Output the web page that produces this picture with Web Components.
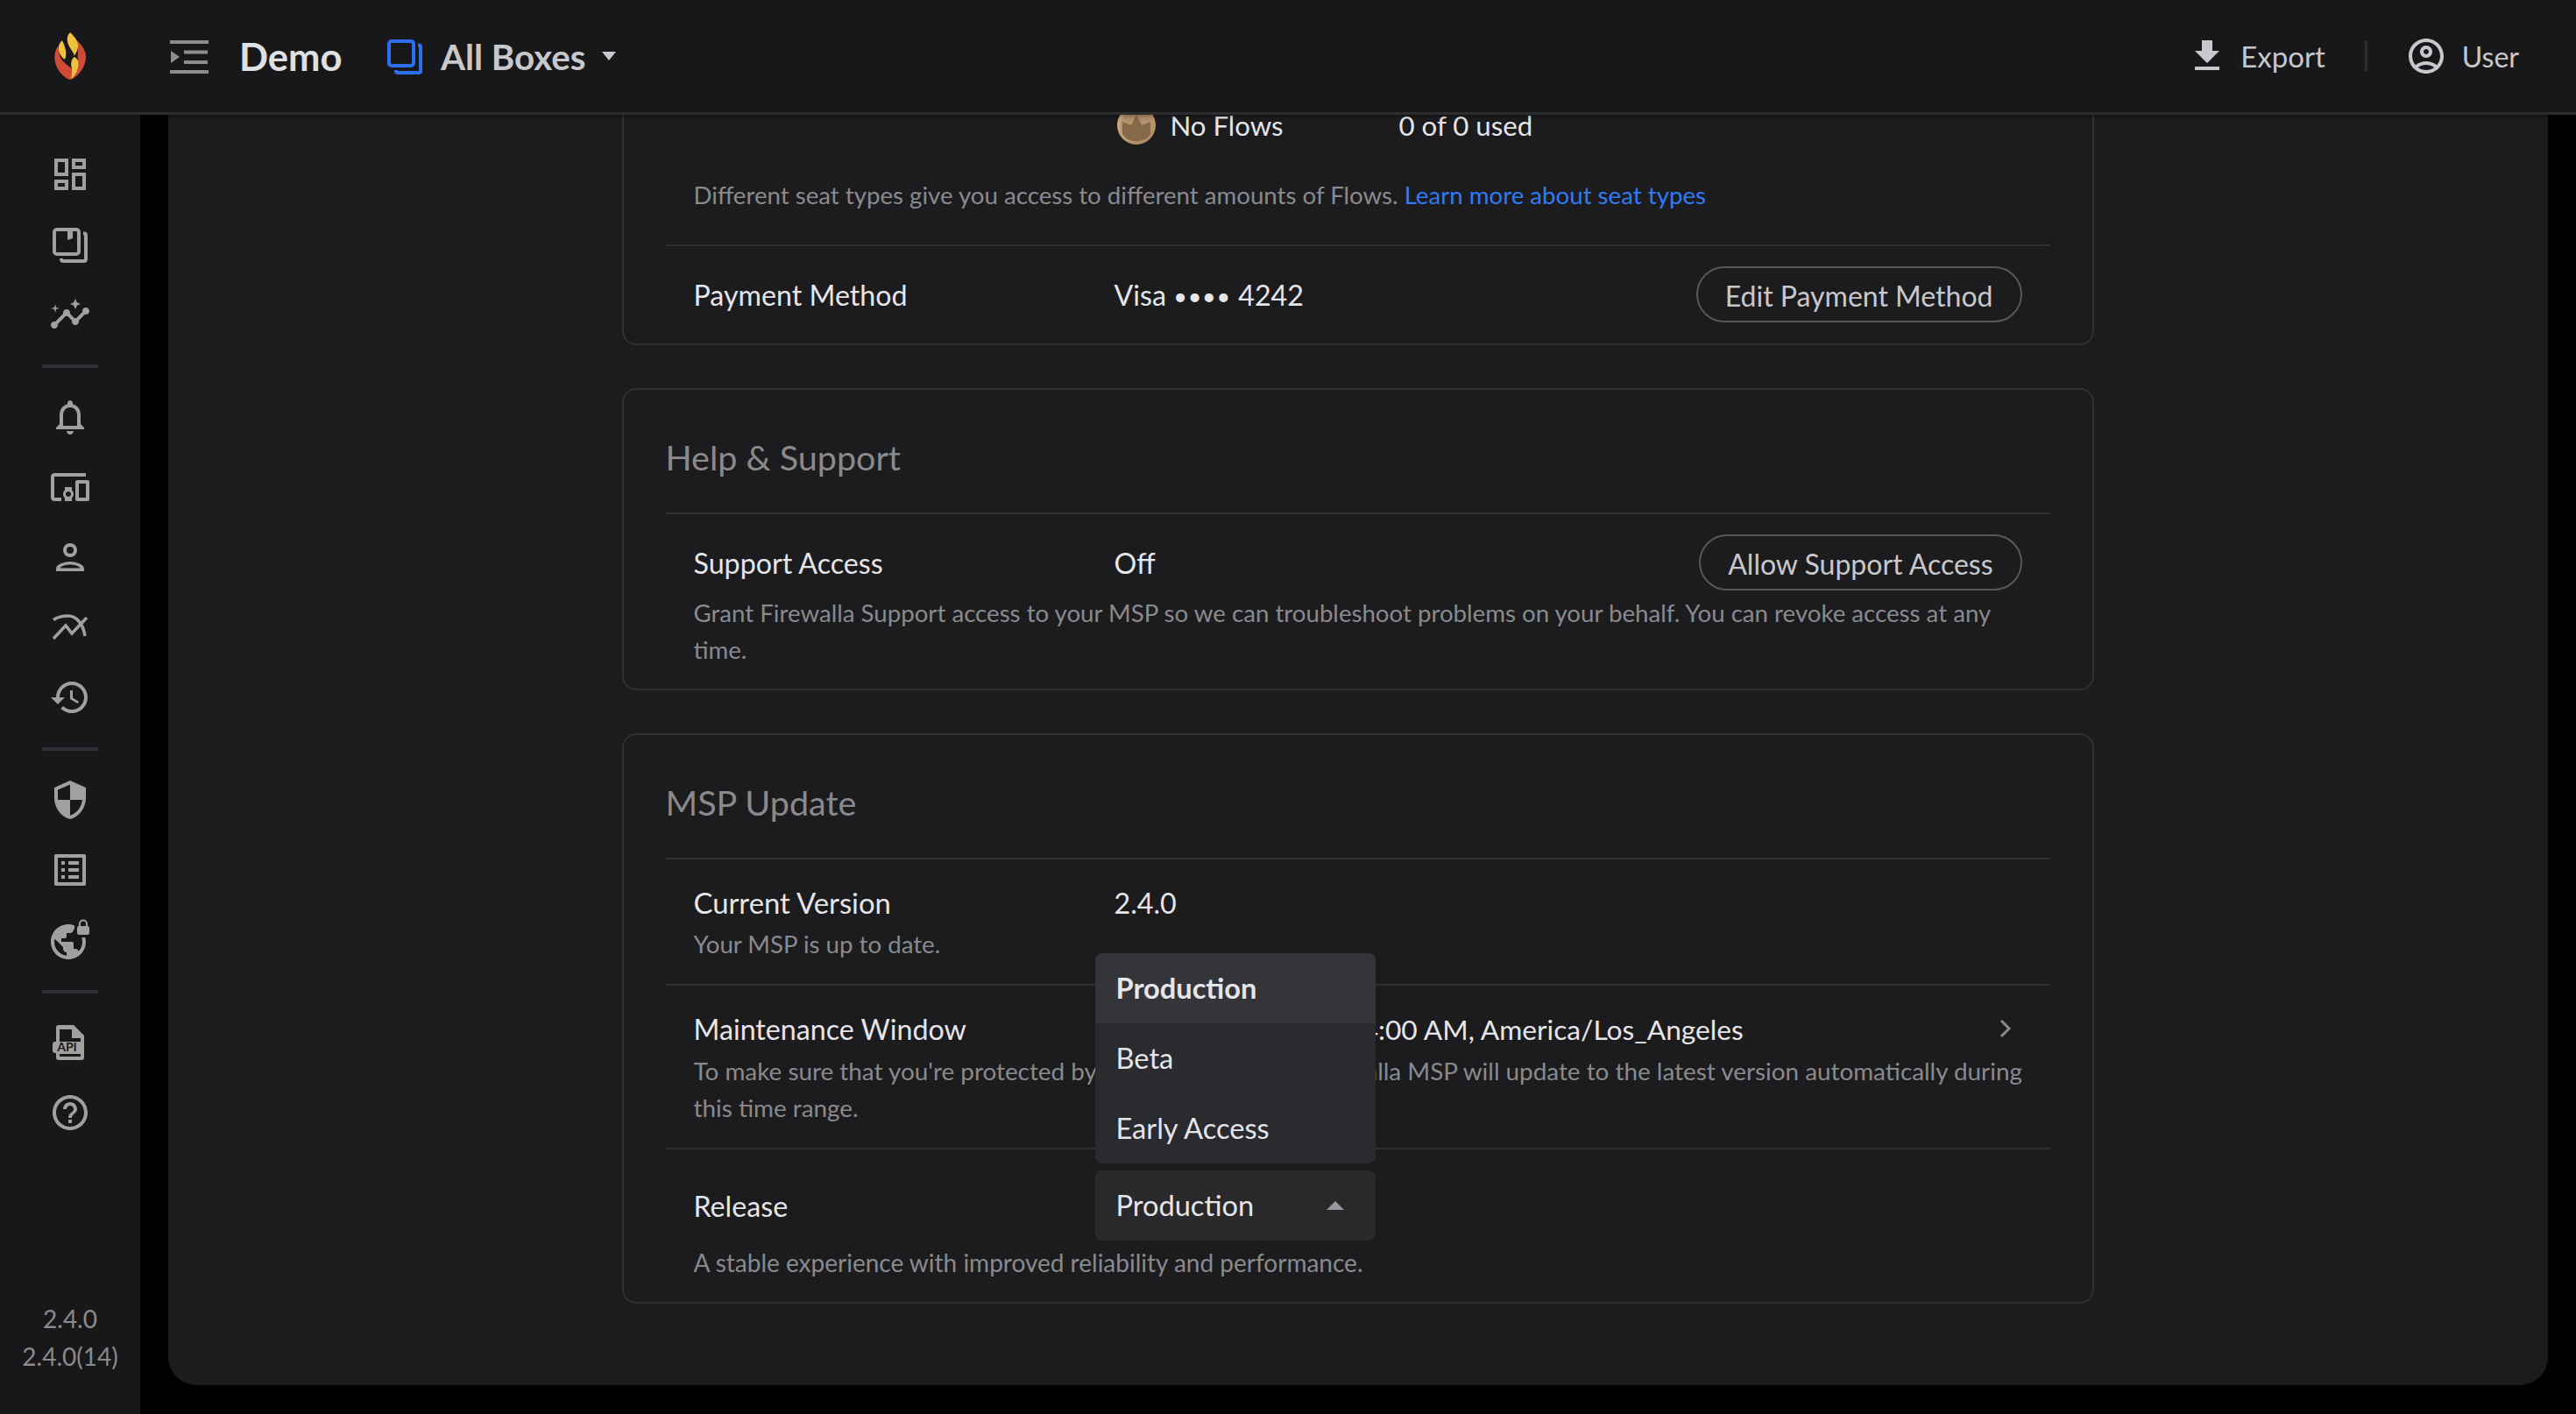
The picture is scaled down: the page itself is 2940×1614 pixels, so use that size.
<!DOCTYPE html>
<html lang="en">
<head>
<meta charset="utf-8">
<title>MSP Settings</title>
<style>
  html, body { margin: 0; height: 100%; background: #000; overflow: hidden; }
  body { font-family: "Lato", "Liberation Sans", sans-serif; color: #e5e5ea; }
</style>
</head>
<body>
<fw-app>
  <fw-topbar slot="top"></fw-topbar>
  <fw-sidebar slot="side"></fw-sidebar>

  <fw-card style="margin-top:-60px" bare>
    <fw-row style="--top:50px;--head:46px;--gap:36px;--bottom:35px" borderless>
      <seat-usage slot="value"></seat-usage>
      Different seat types give you access to different amounts of Flows. <a-link>Learn more about seat types</a-link>
    </fw-row>
    <fw-row label="Payment Method" style="--top:23px;--head:64px;--bottom:24px">
      <span slot="value">Visa <small style="font-size:27px;vertical-align:1px;letter-spacing:.8px">••••</small> 4242</span>
      <pill-button slot="action">Edit Payment Method</pill-button>
    </fw-row>
  </fw-card>

  <fw-card title="Help &amp; Support">
    <fw-row label="Support Access" style="--top:23px;--head:64px;--gap:5px;--bottom:23px">
      <span slot="value">Off</span>
      <pill-button slot="action">Allow Support Access</pill-button>
      Grant Firewalla Support access to your MSP so we can troubleshoot problems on your behalf. You can revoke access at any time.
    </fw-row>
  </fw-card>

  <fw-card title="MSP Update">
    <fw-row label="Current Version" style="--top:25px;--head:46px;--gap:5px;--bottom:24px;--label:32.800px">
      <span slot="value">2.4.0</span>
      Your MSP is up to date.
    </fw-row>
    <fw-row label="Maintenance Window" style="--top:25px;--head:46px;--gap:6px;--bottom:24px;--desc:27.850px;--over:-14px">
      <span slot="value" style="font-size:31.700px">Sunday, 12:00 AM - 4:00 AM, America/Los_Angeles</span>
      <svg slot="action" width="24" height="24" viewBox="0 0 24 24" style="display:block;margin-right:7px"><path d="M7 3l9 9-9 9" fill="none" stroke="#8a8a8e" stroke-width="3"/></svg>
      To make sure that you're protected by the latest updates, Firewalla MSP will update to the latest version automatically during this time range.
    </fw-row>
    <fw-row label="Release" style="--top:24px;--head:80px;--gap:4px;--bottom:24px;--desc:28px">
      <release-select slot="value" value="Production" options="Production,Beta,Early Access"></release-select>
      A stable experience with improved reliability and performance.
    </fw-row>
  </fw-card>
</fw-app>

<script>
const ICONS = {
  dashboard: '<path d="M19 5v2h-4V5h4M9 5v6H5V5h4m10 8v6h-4v-6h4M9 17v2H5v-2h4M21 3h-8v6h8V3zM11 3H3v10h8V3zm10 8h-8v10h8V11zm-10 4H3v6h8v-6z"/>',
  insights: '<path d="M21 8c-1.45 0-2.26 1.44-1.93 2.51l-3.55 3.56c-.3-.09-.74-.09-1.04 0l-2.55-2.55C12.27 10.45 11.46 9 10 9c-1.45 0-2.27 1.44-1.93 2.52l-4.56 4.55C2.44 15.74 1 16.55 1 18c0 1.1.9 2 2 2 1.45 0 2.26-1.44 1.93-2.51l4.55-4.56c.3.09.74.09 1.04 0l2.55 2.55C12.73 16.55 13.54 18 15 18c1.45 0 2.27-1.44 1.93-2.52l3.56-3.55c1.07.33 2.51-.48 2.51-1.93 0-1.1-.9-2-2-2z"/><path d="M15 9l.94-2.07L18 6l-2.06-.93L15 3l-.92 2.07L12 6l2.08.93zM3.5 11L4 9l2-.5L4 8l-.5-2L3 8l-2 .5L3 9z"/>',
  bell: '<path d="M12 22c1.1 0 2-.9 2-2h-4c0 1.1.9 2 2 2zm6-6v-5c0-3.07-1.63-5.64-4.5-6.32V4c0-.83-.67-1.5-1.5-1.5s-1.5.67-1.5 1.5v.68C7.64 5.36 6 7.92 6 11v5l-2 2v1h16v-1l-2-2zm-2 1H8v-6c0-2.48 1.51-4.5 4-4.5s4 2.02 4 4.5v6z"/>',
  devices: '<path d="M3 6h18V4H3c-1.1 0-2 .9-2 2v12c0 1.1.9 2 2 2h4v-2H3V6zm10 6H9v1.78c-.61.55-1 1.33-1 2.22s.39 1.67 1 2.22V20h4v-1.78c.61-.55 1-1.34 1-2.22s-.39-1.67-1-2.22V12zm-2 5.5c-.83 0-1.5-.67-1.5-1.5s.67-1.5 1.5-1.5 1.5.67 1.5 1.5-.67 1.5-1.5 1.5zM22 8h-6c-.5 0-1 .5-1 1v10c0 .5.5 1 1 1h6c.5 0 1-.5 1-1V9c0-.5-.5-1-1-1zm-1 10h-4v-8h4v8z"/>',
  history: '<path d="M13 3c-4.97 0-9 4.03-9 9H1l3.89 3.89.07.14L9 12H6c0-3.87 3.13-7 7-7s7 3.13 7 7-3.13 7-7 7c-1.93 0-3.68-.79-4.94-2.06l-1.42 1.42C8.27 19.99 10.51 21 13 21c4.97 0 9-4.03 9-9s-4.03-9-9-9zm-1 5v5l4.28 2.54.72-1.21-3.5-2.08V8H12z"/>',
  shield: '<path d="M12 1L3 5v6c0 5.55 3.84 10.74 9 12 5.16-1.26 9-6.45 9-12V5l-9-4zm0 10.99h7c-.53 4.12-3.28 7.79-7 8.94V12H5V6.3l7-3.11v8.8z"/>',
  list: '<path d="M19 5v14H5V5h14m1.1-2H3.9c-.5 0-.9.4-.9.9v16.2c0 .4.4.9.9.9h16.2c.4 0 .9-.5.9-.9V3.9c0-.5-.5-.9-.9-.9zM11 7h6v2h-6V7zm0 4h6v2h-6v-2zm0 4h6v2h-6zM7 7h2v2H7zm0 4h2v2H7zm0 4h2v2H7z"/>',
  help: '<path d="M11 18h2v-2h-2v2zm1-16C6.48 2 2 6.48 2 12s4.48 10 10 10 10-4.48 10-10S17.52 2 12 2zm0 18c-4.41 0-8-3.59-8-8s3.59-8 8-8 8 3.59 8 8-3.59 8-8 8zm0-14c-2.21 0-4 1.79-4 4h2c0-1.1.9-2 2-2s2 .9 2 2c0 2-3 1.75-3 5h2c0-2.25 3-2.5 3-5 0-2.21-1.79-4-4-4z"/>',
  download: '<path d="M19 9h-4V3H9v6H5l7 7 7-7zM5 18v2h14v-2H5z"/>',
  account: '<path d="M12 2C6.48 2 2 6.48 2 12s4.48 10 10 10 10-4.48 10-10S17.52 2 12 2zM7.35 18.5C8.66 17.56 10.26 17 12 17s3.34.56 4.65 1.5c-1.31.94-2.91 1.5-4.65 1.5s-3.34-.56-4.65-1.5zm10.79-1.38C16.45 15.8 14.32 15 12 15s-4.45.8-6.14 2.12C4.7 15.73 4 13.95 4 12c0-4.42 3.58-8 8-8s8 3.58 8 8c0 1.95-.7 3.73-1.86 5.12z"/><path d="M12 6c-1.93 0-3.5 1.57-3.5 3.5S10.07 13 12 13s3.5-1.57 3.5-3.5S13.93 6 12 6zm0 5c-.83 0-1.5-.67-1.5-1.5S11.17 8 12 8s1.5.67 1.5 1.5S12.83 11 12 11z"/>'
};

// these are drawn on the 48 grid, not the 24 one
const ICONS48 = {
  boxes: '<rect x="6" y="7" width="28" height="28" rx="3" fill="none" stroke="currentColor" stroke-width="4"/><path d="M39 11.5h1a2 2 0 0 1 2 2V41a2 2 0 0 1-2 2H16a2 2 0 0 1-2-2v-1" fill="none" stroke="currentColor" stroke-width="4"/>',
  pages: '<rect x="6" y="7" width="28" height="28" rx="3" fill="none" stroke="currentColor" stroke-width="4"/><path d="M21 8h6v9l-6 2z"/><path d="M39 11.5h1a2 2 0 0 1 2 2V41a2 2 0 0 1-2 2H16a2 2 0 0 1-2-2v-1" fill="none" stroke="currentColor" stroke-width="4"/>',
  person: '<circle cx="24" cy="16" r="6" fill="none" stroke="currentColor" stroke-width="4"/><path fill-rule="evenodd" d="M8 40v-3c0-5.300 10.700-8 16-8s16 2.700 16 8v3zM12.500 36.500h23c-1-2.500-7-4-11.500-4s-10.500 1.500-11.500 4z"/>',
  flows: '<path d="M5 15.500C10 12 16 11 22 11c9 0 17 9 19 23" fill="none" stroke="currentColor" stroke-width="3.500"/><path d="M5 37l14-15 7 9 17-18" fill="none" stroke="currentColor" stroke-width="3.500"/>',
  globelock: '<g transform="translate(-2 2) scale(2)"><path d="M12 2C6.480 2 2 6.480 2 12s4.480 10 10 10 10-4.480 10-10S17.520 2 12 2zm-1 17.930c-3.950-.490-7-3.850-7-7.930 0-.620.080-1.210.210-1.790L9 15v1c0 1.100.900 2 2 2v1.930zm6.900-2.540c-.260-.810-1-1.390-1.900-1.390h-1v-3c0-.550-.450-1-1-1H8v-2h2c.550 0 1-.450 1-1V7h2c1.100 0 2-.900 2-2v-.410c2.930 1.190 5 4.060 5 7.410 0 2.080-.800 3.970-2.100 5.390z"/></g><rect x="29" y="4" width="20" height="17" rx="4" fill="#18181a"/><rect x="32" y="8" width="14" height="10" rx="2"/><path d="M35 9V5.500a4 4 0 0 1 8 0V9" fill="none" stroke="currentColor" stroke-width="2"/>',
  api: '<path d="M11 4h17l12 12v25a3 3 0 0 1-3 3H11a3 3 0 0 1-3-3V7a3 3 0 0 1 3-3z"/><path d="M12 9h14v10h10v4H12z" fill="#18181a"/><rect x="4" y="23" width="10" height="13" rx="3"/><rect x="12" y="37" width="24" height="3" fill="#18181a"/><text x="20.500" y="34" text-anchor="middle" font-family="Lato, sans-serif" font-size="14" font-weight="700" fill="#18181a">API</text>'
};

function svgIcon(name, size) {
  size = size || 48;
  if (ICONS48[name]) return `<svg width="${size}" height="${size}" viewBox="0 0 48 48" fill="currentColor">${ICONS48[name]}</svg>`;
  return `<svg width="${size}" height="${size}" viewBox="0 0 24 24" fill="currentColor">${ICONS[name]}</svg>`;
}

class FwApp extends HTMLElement {
  constructor() {
    super();
    this.attachShadow({ mode: 'open' }).innerHTML = `
      <style>
        :host { display: grid; grid-template-rows: 131px 1fr; grid-template-columns: 160px 1fr; height: 100vh; background: #000; }
        .top { grid-column: 1 / 3; position: relative; z-index: 2; box-shadow: 0 2px 5px rgba(0,0,0,.35); }
        .side { background: #18181a; min-height: 0; }
        .panel { margin: -3px 32px 33px 32px; background: #1c1c1e; border-radius: 0 0 32px 32px; overflow: hidden; min-height: 0; display: flex; flex-direction: column; align-items: center; gap: 49px; }
        ::slotted(fw-card) { flex: none; width: 1680px; margin-right: 1px; }
      </style>
      <div class="top"><slot name="top"></slot></div>
      <div class="side"><slot name="side"></slot></div>
      <div class="panel"><slot></slot></div>`;
  }
}

class FwTopbar extends HTMLElement {
  constructor() {
    super();
    this.attachShadow({ mode: 'open' }).innerHTML = `
      <style>
        :host { display: flex; align-items: center; height: 128px; background: #18181a; border-bottom: 3px solid #2d2d2f; }
        .logo { width: 160px; display: flex; justify-content: center; flex: none; }
        svg { display: block; flex: none; }
        .menu { margin: 2px 0 0 34px; }
        .demo { margin-left: 35px; width: 161px; font-size: 43.500px; font-weight: 700; color: #e0e0e2; }
        .boxes { color: #2b6ef0; margin-left: 4px; }
        .all { margin-left: 17px; font-size: 40.300px; font-weight: 700; color: #c8c8cc; }
        .caret { margin: 0 0 0 18px; }
        .right { margin-left: auto; display: flex; align-items: center; padding-right: 65px; font-size: 32px; color: #c8c8cc; }
        .sep { width: 3px; height: 34px; background: #2d2d2f; margin: 0 43px 0 45px; }
        .lbl { margin-left: 17px; }
      </style>
      <div class="logo">
        <svg width="36" height="54" viewBox="0 0 108 162">
          <path fill="#d04a37" d="M10 50C-4 75-2 110 18 135c12 15 27 25 37 27 7-12 9-27 7-34C50 112 20 100 18 75 16 65 14 55 12 48z"/>
          <path fill="#d04a37" d="M78 28c22 22 34 42 29 67-5 30-27 55-47 65 12-20 25-40 20-72 0-13 2-33-2-60z"/>
          <path fill="#eec23e" d="M54 0C40 12 42 35 55 55c7 10 13 20 13 25 14-18 16-35 10-50C72 18 62 8 54 0z"/>
          <path fill="#eec23e" d="M26 28C14 40 10 55 20 75c5 10 12 17 16 17 6-12 4-32 0-42-3-10-6-18-10-22z"/>
          <path fill="#eec23e" d="M68 84c-8 6-14 21-8 41 2 15-2 30-5 37 17-12 30-37 27-62-2-8-8-14-14-16z"/>
        </svg>
      </div>
      <svg class="menu" width="44" height="38" viewBox="0 0 44 38" fill="#8e8e8e">
        <rect width="44" height="4"/><rect x="16" y="11.500" width="27" height="4"/><rect x="16" y="23" width="27" height="4"/><rect y="34" width="44" height="4"/>
        <path d="M1 12l10 7-10 7z"/>
      </svg>
      <div class="demo">Demo</div>
      <span class="boxes">${svgIcon('boxes')}</span>
      <div class="all">All Boxes</div>
      <svg class="caret" width="16" height="10" viewBox="0 0 16 10"><path d="M0 0h16l-8 10z" fill="#c8c8cc"/></svg>
      <div class="right">
        ${svgIcon('download')}<span class="lbl" style="margin-left:14px;font-size:33px">Export</span>
        <span class="sep"></span>
        ${svgIcon('account')}<span class="lbl">User</span>
      </div>`;
  }
}

class FwSidebar extends HTMLElement {
  constructor() {
    super();
    const groups = [['dashboard', 'pages', 'insights'], ['bell', 'devices', 'person', 'flows', 'history'], ['shield', 'list', 'globelock'], ['api', 'help']];
    const nav = groups.map(g => g.map(n => `<div class="item">${svgIcon(n)}</div>`).join('')).join('<div class="div"><i></i></div>');
    this.attachShadow({ mode: 'open' }).innerHTML = `
      <style>
        :host { display: flex; flex-direction: column; align-items: center; height: 100%; padding: 28px 0 44px; box-sizing: border-box; color: #a0a0a0; }
        .item { height: 80px; width: 160px; display: flex; align-items: center; justify-content: center; }
        .div { height: 37px; display: flex; align-items: center; }
        .div i { display: block; width: 64px; height: 4px; background: #2f2f33; }
        svg { display: block; }
        .ver { margin-top: auto; text-align: center; font-size: 28px; line-height: 43px; color: #8a8a8a; }
      </style>
      ${nav}
      <div class="ver">2.4.0<br>2.4.0(14)</div>`;
  }
}

class FwCard extends HTMLElement {
  constructor() {
    super();
    const title = this.getAttribute('title');
    this.attachShadow({ mode: 'open' }).innerHTML = `
      <style>
        :host { display: block; box-sizing: border-box; border: 2px solid #303032; border-radius: 16px; padding: 0 48px; position: relative; }
        h2 { margin: 0; height: 140px; display: flex; align-items: center; padding-top: 12px; box-sizing: border-box; font-size: 39.500px; font-weight: 400; color: #8a8a8e; }
      </style>
      ${title ? `<h2>${title.replace('&', '&amp;')}</h2>` : ''}
      <slot></slot>`;
  }
}

class FwRow extends HTMLElement {
  constructor() {
    super();
    this.attachShadow({ mode: 'open' }).innerHTML = `
      <style>
        :host { display: block; border-top: 2px solid #303032; padding: var(--top, 23px) 32px var(--bottom, 23px); font-size: var(--desc, 27.650px); line-height: 42px; color: #8a8a8e; }
        :host([borderless]) { border-top: 0; }
        .head { display: grid; grid-template-columns: 480px 1fr auto; align-items: center; height: var(--head, 46px); font-size: 32.200px; line-height: 46px; color: #e5e5ea; }
        .lbl { padding-top: 2px; font-size: var(--label, 32.200px); }
        ::slotted(span[slot="value"]) { display: block; padding-top: 2px; }
        .body { margin-top: var(--gap, 0); margin-right: var(--over, 0); }
      </style>
      <div class="head"><div class="lbl">${this.getAttribute('label') || ''}</div><div><slot name="value"></slot></div><div><slot name="action"></slot></div></div>
      <div class="body"><slot></slot></div>`;
  }
}

class SeatUsage extends HTMLElement {
  constructor() {
    super();
    this.attachShadow({ mode: 'open' }).innerHTML = `
      <style>
        :host { display: flex; align-items: center; margin-left: 3px; font-size: 31.200px; }
        svg { display: block; flex: none; }
        .name { margin-left: 17px; width: 261px; }
      </style>
      <svg width="44" height="44" viewBox="0 0 44 44">
        <defs><linearGradient id="m" x1="0" y1="0" x2="1" y2="1"><stop offset="0" stop-color="#d3b08c"/><stop offset="1" stop-color="#a98559"/></linearGradient></defs>
        <circle cx="22" cy="22" r="22" fill="url(#m)"/>
        <circle cx="22" cy="22" r="18" fill="#b3926d"/>
        <path d="M6 32V18l10 4 6-12 6 12 10-4v14a18 15 0 0 1-32 0z" fill="#86694a"/>
      </svg>
      <span class="name">No Flows</span><span>0 of 0 used</span>`;
  }
}

class ALink extends HTMLElement {
  constructor() {
    super();
    this.attachShadow({ mode: 'open' }).innerHTML = `<style>:host { display: inline; color: #2f7bf5; }</style><slot></slot>`;
  }
}

class PillButton extends HTMLElement {
  constructor() {
    super();
    this.attachShadow({ mode: 'open' }).innerHTML = `
      <style>
        :host { display: inline-flex; align-items: center; height: 64px; box-sizing: border-box; padding: 3px 31px 0; border: 2px solid #58585c; border-radius: 32px; font-size: 32px; color: #c8c8cc; white-space: nowrap; }
      </style><slot></slot>`;
  }
}

class ReleaseSelect extends HTMLElement {
  constructor() {
    super();
    const value = this.getAttribute('value');
    const opts = this.getAttribute('options').split(',');
    this.attachShadow({ mode: 'open' }).innerHTML = `
      <style>
        :host { display: block; position: relative; width: 320px; height: 80px; margin-left: -22px; font-size: 32.600px; }
        .box { height: 100%; box-sizing: border-box; display: flex; align-items: center; justify-content: space-between; padding: 0 36px 0 24px; background: #29292b; border-radius: 8px; color: #e5e5ea; }
        .menu { position: absolute; left: 0; right: 0; bottom: 88px; background: #2b2b2f; border-radius: 8px; overflow: hidden; z-index: 5; }
        .opt { height: 80px; display: flex; align-items: center; padding: 0 24px; }
        .opt.on { background: #353539; font-weight: 700; }
      </style>
      <div class="menu">${opts.map(o => `<div class="opt ${o === value ? 'on' : ''}">${o}</div>`).join('')}</div>
      <div class="box"><span>${value}</span>
        <svg width="20" height="10" viewBox="0 0 20 10"><path d="M10 0l10 10H0z" fill="#98989c"/></svg></div>`;
  }
}

customElements.define('fw-app', FwApp);
customElements.define('fw-topbar', FwTopbar);
customElements.define('fw-sidebar', FwSidebar);
customElements.define('fw-card', FwCard);
customElements.define('fw-row', FwRow);
customElements.define('seat-usage', SeatUsage);
customElements.define('a-link', ALink);
customElements.define('pill-button', PillButton);
customElements.define('release-select', ReleaseSelect);
</script>
</body>
</html>
